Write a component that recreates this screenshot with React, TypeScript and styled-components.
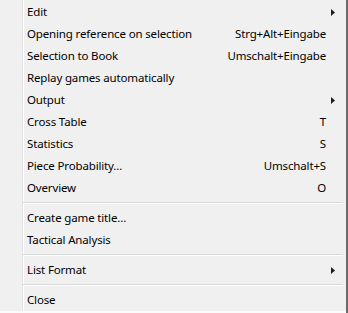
import React from 'react'
import styled, { createGlobalStyle } from 'styled-components'

const GlobalStyle = createGlobalStyle`
  html, body {
    margin: 0;
    padding: 0;
    background: #fbfbfb;
  }
  body {
    font-family: 'Noto Sans', 'Open Sans', sans-serif;
    font-size: 11.5px;
    letter-spacing: -0.15px;
    color: #000;
  }
`

const Screen = styled.div`
  display: flex;
  width: 348px;
  height: 313px;
  align-items: flex-start;
`

const Menu = styled.div`
  width: 346px;
  height: 310px;
  padding-top: 1px;
  background-color: #f0f0f0;
  background-image: linear-gradient(
    to right,
    transparent 22px,
    #e2e2e2 22px,
    #e2e2e2 23px,
    #ffffff 23px,
    #ffffff 24px,
    transparent 24px
  );
  display: flex;
  flex-direction: column;
`

const BehindEdge = styled.div`
  width: 2px;
  height: 313px;
  background: #6a6a6a;
`

const Row = styled.div`
  height: 22px;
  display: grid;
  grid-template-columns: 1fr auto 20px;
  align-items: center;
  padding-left: 27px;
  line-height: 22px;
  white-space: nowrap;
`

const Label = styled.span``

const Shortcut = styled.span`
  text-align: right;
  padding-left: 24px;
`

const ArrowCell = styled.span`
  display: flex;
  align-items: center;
  padding-left: 5px;
`

const Separator = styled.div`
  height: 8px;
  display: flex;
  flex-direction: column;
  justify-content: center;
  margin-left: 23px;
  margin-right: 3px;

  &::after {
    content: '';
    display: block;
    height: 1px;
    border-top: 1px solid #dadada;
    background: #ffffff;
  }
`

const SubArrow = () => (
  <svg width='4' height='7' viewBox='0 0 4 7'>
    <polygon points='0,0 4,3.5 0,7' fill='#1e1e1e' />
  </svg>
)

type Item =
  | { kind: 'item'; label: string; shortcut?: string; submenu?: boolean }
  | { kind: 'sep' }

const items: Item[] = [
  { kind: 'item', label: 'Edit', submenu: true },
  { kind: 'item', label: 'Opening reference on selection', shortcut: 'Strg+Alt+Eingabe' },
  { kind: 'item', label: 'Selection to Book', shortcut: 'Umschalt+Eingabe' },
  { kind: 'item', label: 'Replay games automatically' },
  { kind: 'item', label: 'Output', submenu: true },
  { kind: 'item', label: 'Cross Table', shortcut: 'T' },
  { kind: 'item', label: 'Statistics', shortcut: 'S' },
  { kind: 'item', label: 'Piece Probability...', shortcut: 'Umschalt+S' },
  { kind: 'item', label: 'Overview', shortcut: 'O' },
  { kind: 'sep' },
  { kind: 'item', label: 'Create game title...' },
  { kind: 'item', label: 'Tactical Analysis' },
  { kind: 'sep' },
  { kind: 'item', label: 'List Format', submenu: true },
  { kind: 'sep' },
  { kind: 'item', label: 'Close' },
]

const App: React.FC = () => (
  <>
    <GlobalStyle />
    <Screen>
      <Menu>
        {items.map((item, i) =>
          item.kind === 'sep' ? (
            <Separator key={i} />
          ) : (
            <Row key={i}>
              <Label>{item.label}</Label>
              <Shortcut>{item.shortcut}</Shortcut>
              <ArrowCell>{item.submenu && <SubArrow />}</ArrowCell>
            </Row>
          )
        )}
      </Menu>
      <BehindEdge />
    </Screen>
  </>
)

export default App
